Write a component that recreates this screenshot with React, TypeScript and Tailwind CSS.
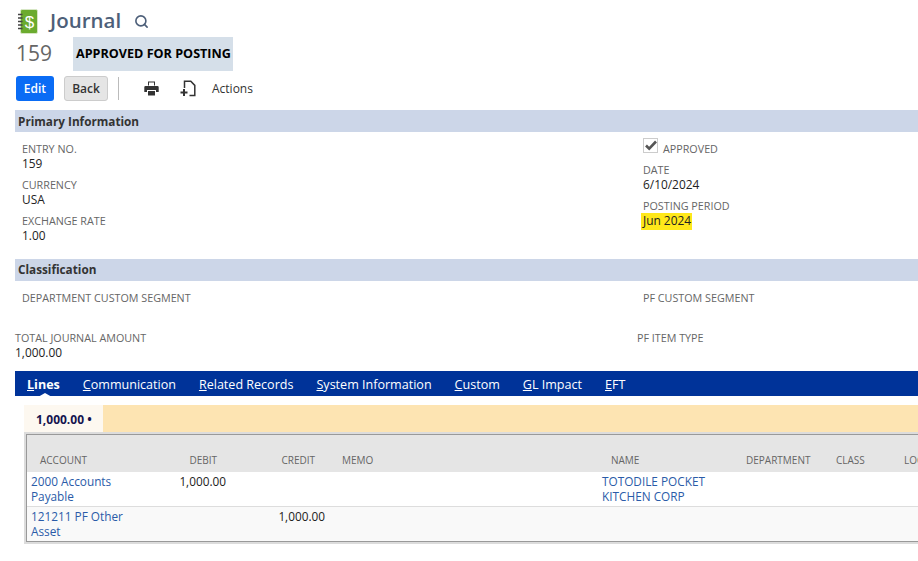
import { Search } from 'lucide-react';

const sans = '[font-family:"Open_Sans",sans-serif]';

function Field({ label, value, className = '' }: { label: string; value?: string; className?: string }) {
  return (
    <div className={className}>
      <div className="text-[10.75px] leading-[14px] uppercase text-[#666]">{label}</div>
      {value && <div className="text-[11.9px] leading-[15px] text-[#222]">{value}</div>}
    </div>
  );
}

function SectionBar({ title, className = 'leading-[22px]' }: { title: string; className?: string }) {
  return (
    <div className={`h-[22px] ml-[15px] pl-[3px] bg-[#ccd6e8] text-[11.75px] font-bold text-[#333] ${className}`}>
      {title}
    </div>
  );
}

function Tab({ k, rest, active }: { k: string; rest: string; active?: boolean }) {
  return (
    <span className={`relative text-[12.55px] leading-[27px] text-white ${active ? 'font-bold' : ''}`}>
      <span className="underline">{k}</span>
      {rest}
      {active && (
        <span className="absolute left-[11px] bottom-[-1px] border-x-[7px] border-b-[4px] border-x-transparent border-b-white" />
      )}
    </span>
  );
}

export default function App() {
  return (
    <div className={`w-[918px] h-[561px] overflow-hidden bg-white ${sans}`}>
      {/* Title */}
      <div className="flex items-center h-[37px] pt-[6px] pl-[18px]">
        <svg width="20" height="25" viewBox="0 0 20 25">
          <rect x="2.5" y="0.5" width="17" height="24" rx="1.5" fill="#6bab2e" stroke="#d6e6c4" />
          <path d="M0 5.5h4.5M0 9h4.5M0 12.5h4.5M0 16h4.5M0 19.5h4.5" stroke="#444" strokeWidth="1.4" />
          <text x="11.5" y="18.5" textAnchor="middle" fontSize="17" fill="#fff" fontFamily="Liberation Sans">$</text>
        </svg>
        <h1 className="ml-[12px] -mt-[3px] text-[20.5px] leading-[24px] font-semibold text-[#4d5f79]">Journal</h1>
        <Search className="ml-[13px] text-[#4d5f79]" size={15} strokeWidth={2.6} />
      </div>

      {/* Record number and status */}
      <div className="flex items-center h-[34px] pl-[16px]">
        <span className="w-[57px] text-[21px] text-[#666]">159</span>
        <span className="flex items-center h-[34px] px-[3px] w-[160px] bg-[#d5dfe9] text-[12.6px] font-bold text-black whitespace-nowrap">
          APPROVED FOR POSTING
        </span>
      </div>

      {/* Toolbar */}
      <div className="flex items-center h-[25px] mt-[5px] pl-[16px]">
        <button className="w-[38px] h-[25px] rounded-[3px] bg-[#0a6cf5] text-white text-[12px] font-semibold">Edit</button>
        <button className="ml-[10px] w-[44px] h-[25px] rounded-[3px] border border-[#ccc] bg-[#e5e5e5] text-[#333] text-[12px] font-semibold">Back</button>
        <div className="ml-[10px] w-px h-[23px] bg-[#bbb]" />
        <svg className="ml-[25px]" width="15" height="15" viewBox="0 0 15 15" fill="#333">
          <path d="M4 0.5h7v4h-1V1.5H5v3H4z" />
          <path d="M1.5 5h12a1.2 1.2 0 0 1 1.2 1.2V11H12V9H3v2H.3V6.2A1.2 1.2 0 0 1 1.5 5z" />
          <path d="M4 10h7v4.5H4z" />
        </svg>
        <svg className="ml-[21px]" width="16" height="17" viewBox="0 0 16 17" fill="none" stroke="#333" strokeWidth="1.5">
          <path d="M4.5 8V1.2h6.3l4 4.2v10H9.5" />
          <path d="M0.5 12.5h7M4 9v7" strokeWidth="2" />
        </svg>
        <span className="ml-[16px] text-[12px] text-[#333]">Actions</span>
      </div>

      {/* Primary Information */}
      <div className="mt-[9px]">
        <SectionBar title="Primary Information" />
      </div>
      <div className="flex h-[127px] pl-[22px]">
        <div className="w-[621px] pt-[10px] flex flex-col gap-[7px]">
          <Field label="Entry No." value="159" />
          <Field label="Currency" value="USA" />
          <Field label="Exchange Rate" value="1.00" />
        </div>
        <div className="pt-[6px]">
          <div className="flex items-end h-[15px]">
            <span className="flex items-center justify-center w-[15px] h-[15px] border border-[#ccc] text-[#555]">
              <svg width="12" height="11" viewBox="0 0 12 11"><path d="M1 5.5l3.2 3.2L11 1.5" fill="none" stroke="#555" strokeWidth="2.6" /></svg>
            </span>
            <span className="ml-[5px] -mb-[3px] text-[10.75px] leading-[14px] text-[#666]">APPROVED</span>
          </div>
          <Field className="mt-[10px]" label="Date" value="6/10/2024" />
          <div className="mt-[7px] text-[10.75px] leading-[14px] text-[#666]">POSTING PERIOD</div>
          <div className="-ml-[2px] w-[51px] h-[17px] pl-[2px] bg-[#ffe81a] text-[11.9px] leading-[15px] text-[#222]">Jun 2024</div>
        </div>
      </div>

      {/* Classification */}
      <SectionBar title="Classification" className="leading-[21px]" />
      <div className="flex h-[50px] pt-[10px] pl-[22px]">
        <Field className="w-[621px]" label="Department Custom Segment" />
        <Field label="PF Custom Segment" />
      </div>
      <div className="flex h-[40px] pl-[15px]">
        <Field className="w-[622px]" label="Total Journal Amount" value="1,000.00" />
        <Field label="PF Item Type" />
      </div>

      {/* Tabs */}
      <div className="flex gap-[23px] h-[25px] ml-[15px] pl-[12px] bg-[#003399]">
        <Tab k="L" rest="ines" active />
        <Tab k="C" rest="ommunication" />
        <Tab k="R" rest="elated Records" />
        <Tab k="S" rest="ystem Information" />
        <Tab k="C" rest="ustom" />
        <Tab k="G" rest="L Impact" />
        <Tab k="E" rest="FT" />
      </div>

      {/* Sublist */}
      <div className="ml-[24px] mt-[9px]">
        <div className="flex h-[27px] bg-[#fde4b2]">
          <div className="w-[79px] pl-[12px] bg-[#fdf8f0] text-[12px] leading-[29px] font-bold text-[#14144f] whitespace-nowrap">1,000.00 •</div>
        </div>
        <div className="border-[2px] border-r-0 border-[#dcdcdc]">
          <div className="border border-r-0 border-[#999]">
            <table className="table-fixed w-[1000px] border-collapse text-[11.8px] leading-[15px]">
              <colgroup>
                <col className="w-[116px]" />
                <col className="w-[87px]" />
                <col className="w-[99px]" />
                <col className="w-[269px]" />
                <col className="w-[143px]" />
                <col className="w-[90px]" />
                <col className="w-[68px]" />
                <col />
              </colgroup>
              <thead>
                <tr className="h-[37px] bg-[#e5e5e5] text-[10px] font-normal text-[#666]">
                  <th className="pt-[14px] pl-[13px] text-left font-normal">ACCOUNT</th>
                  <th className="pt-[14px] pr-[13px] text-right font-normal">DEBIT</th>
                  <th className="pt-[14px] pr-[14px] text-right font-normal">CREDIT</th>
                  <th className="pt-[14px] pl-[13px] text-left font-normal">MEMO</th>
                  <th className="pt-[14px] pl-[13px] text-left font-normal">NAME</th>
                  <th className="pt-[14px] pl-[5px] text-left font-normal">DEPARTMENT</th>
                  <th className="pt-[14px] pl-[5px] text-left font-normal">CLASS</th>
                  <th className="pt-[14px] pl-[5px] text-left font-normal">LOCATION</th>
                </tr>
              </thead>
              <tbody>
                <tr className="h-[34px] bg-white border-b border-[#ddd] align-top text-[#222]">
                  <td className="pt-[2px] pl-[4px] pr-[10px] text-[#2a5ba8]">2000 Accounts Payable</td>
                  <td className="pt-[2px] pr-[4px] text-right">1,000.00</td>
                  <td />
                  <td />
                  <td className="pt-[2px] pl-[4px] pr-[20px] text-[#2a5ba8]">TOTODILE POCKET KITCHEN CORP</td>
                  <td />
                  <td />
                  <td />
                </tr>
                <tr className="h-[35px] bg-[#f9f9f9] align-top text-[#222]">
                  <td className="pt-[2px] pl-[4px] pr-[10px] text-[#2a5ba8]">121211 PF Other Asset</td>
                  <td />
                  <td className="pt-[2px] pr-[4px] text-right">1,000.00</td>
                  <td />
                  <td />
                  <td />
                  <td />
                  <td />
                </tr>
              </tbody>
            </table>
          </div>
        </div>
      </div>
    </div>
  );
}
